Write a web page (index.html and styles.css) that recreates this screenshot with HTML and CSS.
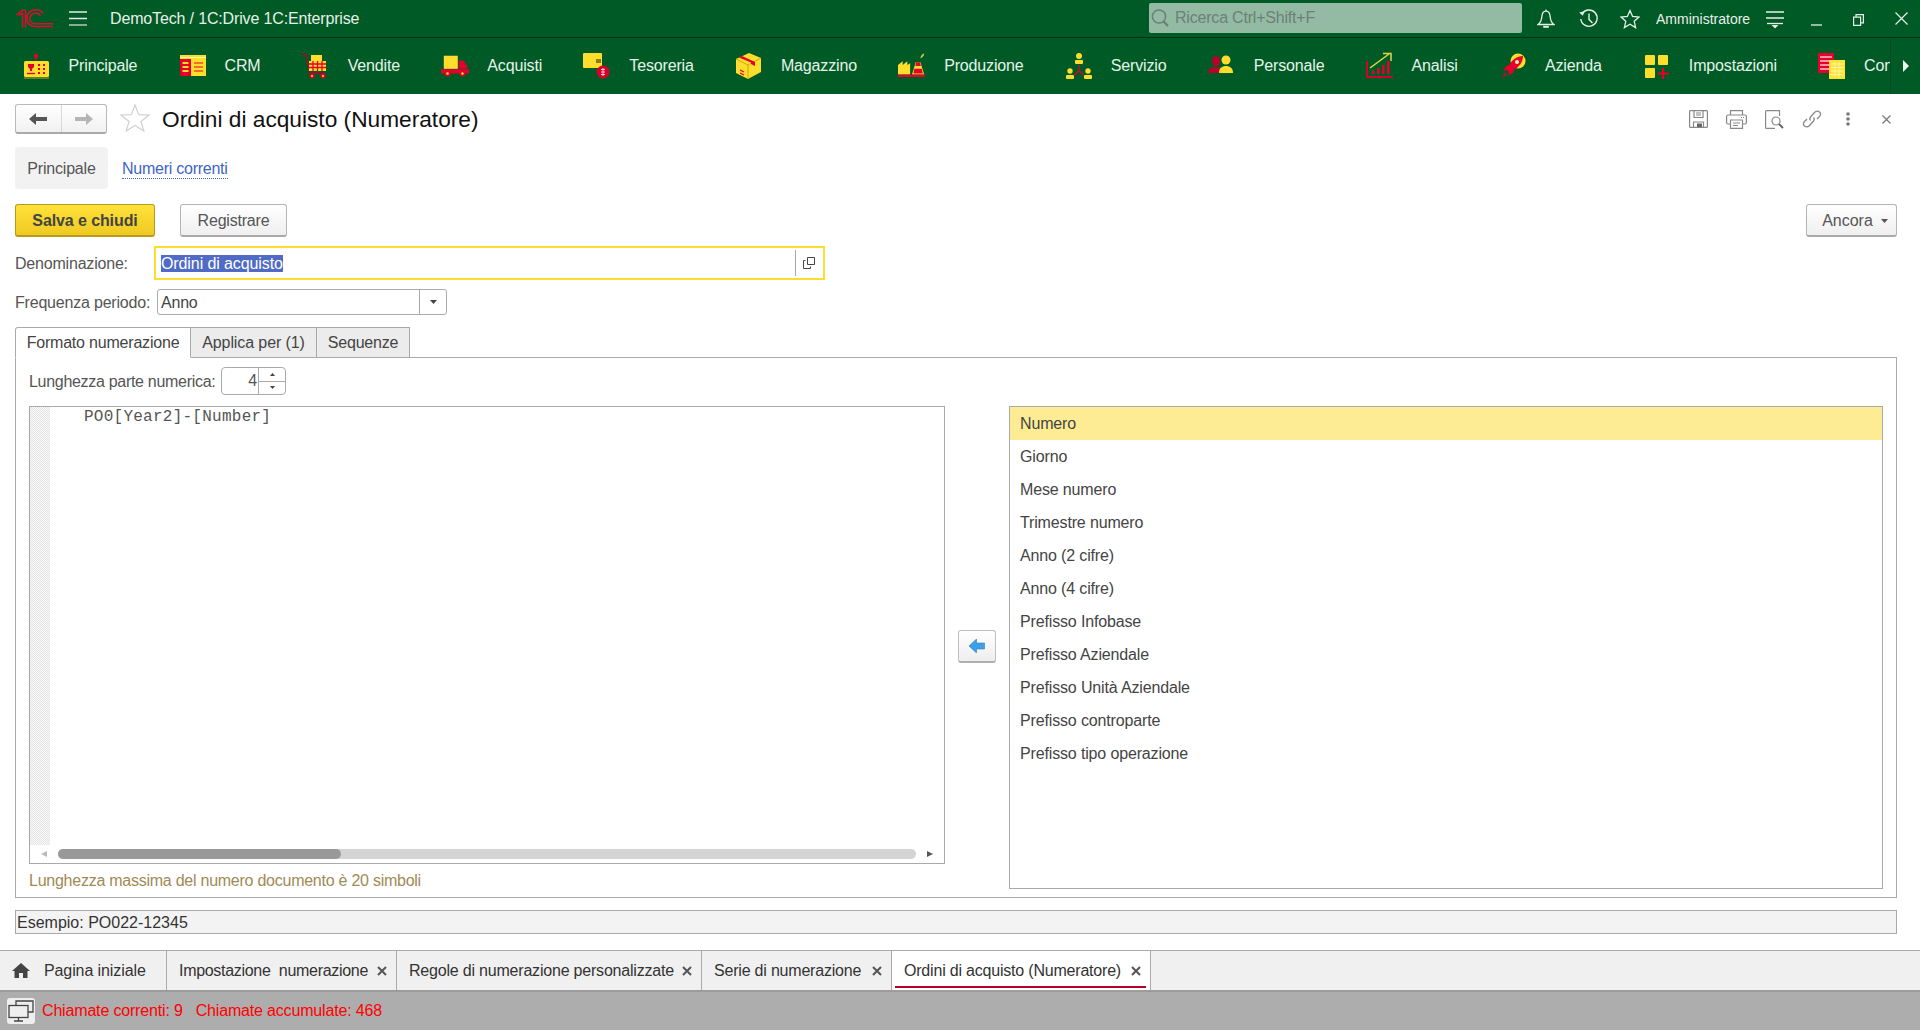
FILE: index.html
```html
<!DOCTYPE html>
<html lang="it">
<head>
<meta charset="utf-8">
<title>Ordini di acquisto (Numeratore)</title>
<link rel="stylesheet" href="styles.css">
</head>
<body>
<header class="topbar">
  <svg class="logo" width="38" height="19" viewBox="0 0 38 19" fill="none" stroke="#d8102d" stroke-width="1.600">
    <path d="M1 6 7.500 1.200H10.500V18.500" stroke-width="1.500"/>
    <path d="M3.500 6.500 7.500 4V18.500" stroke-width="1.500"/>
    <path d="M28 4.500A8.500 8.500 0 0 0 20 .9 8.300 8.300 0 0 0 20 17.500H38"/>
    <path d="M25.500 6.500A5.500 5.500 0 0 0 20 4.200 5.200 5.200 0 0 0 20 14.800H38"/>
  </svg>
  <svg class="burger" width="18" height="15" viewBox="0 0 18 15" stroke="#e4ebe6" stroke-width="1.500"><path d="M0 1h18M0 7.500h18"/><path d="M0 14h18" stroke="#b7c6bc"/></svg>
  <span class="app-title">DemoTech / 1C:Drive 1C:Enterprise</span>
  <div class="search">
    <svg width="18" height="20" viewBox="0 0 18 20" fill="none" stroke="#6b7d74" stroke-width="1.500"><circle cx="8" cy="8.500" r="6.600"/><path d="M12.600 13.500 17 18" stroke-width="2.200"/></svg>
    <span>Ricerca Ctrl+Shift+F</span>
  </div>
  <svg class="bell" width="18" height="20" viewBox="0 0 18 20" fill="none" stroke="#e8efe9" stroke-width="1.300"><path d="M9 2.200C5.800 2.200 5 5 4.800 8 4.600 11 3 14 1 15.500H17C15 14 13.400 11 13.200 8 13 5 12.200 2.200 9 2.200Z"/><path d="M9 .5V2.200"/><path d="M6.200 17.800H11.800" stroke-width="2"/></svg>
  <svg class="hist" width="20" height="20" viewBox="0 0 20 20" fill="none" stroke="#e8efe9" stroke-width="1.400"><path d="M3.200 4.500A8.200 8.200 0 1 1 1.800 10"/><path d="M.6 3.400 3.600 6.200 5.200 2.200" fill="#e8efe9" stroke-width=".8"/><path d="M10 4.500V10.500L13.500 14"/></svg>
  <svg class="fav" width="20" height="20" viewBox="0 0 20 20" fill="none" stroke="#e8efe9" stroke-width="1.300"><path d="M10 1.500 12.600 7.400 19 8 14.200 12.300 15.600 18.600 10 15.300 4.400 18.600 5.800 12.300 1 8 7.400 7.400Z"/></svg>
  <span class="user">Amministratore</span>
  <svg class="filter" width="18" height="18" viewBox="0 0 18 18" stroke="#e8efe9" stroke-width="1.300"><path d="M0 1h18M0 7h18"/><path d="M1 12.500h16" /><path d="M5.500 14h7L9 17.500Z" fill="#e8efe9" stroke="none"/></svg>
  <svg class="win-min" width="11" height="14" viewBox="0 0 11 14" stroke="#e8efe9" stroke-width="1.300"><path d="M0 13h11"/></svg>
  <svg class="win-rest" width="11" height="12" viewBox="0 0 11 12" fill="none" stroke="#e8efe9" stroke-width="1.200"><path d="M.6 3.200H7.600V11.400H.6Z"/><path d="M3 3V.7H10.400V8.800H7.800"/></svg>
  <svg class="win-close" width="13" height="13" viewBox="0 0 13 13" stroke="#e8efe9" stroke-width="1.200"><path d="M.5.5 12.500 12.500M12.500.5.5 12.500"/></svg>
</header>

<nav class="nav">
  <div class="nav-scroll">
    <div class="nav-item">
      <svg width="28" height="26" viewBox="0 0 28 26"><path d="M13 1.500V9" stroke="#e4002b" stroke-width="1.200"/><circle cx="13" cy="3" r="2.200" fill="#e4002b"/><rect x="1" y="8" width="25" height="16" rx="1.500" fill="#ffdd2d"/><path d="M5 11h6v3l-2 2v2h-2v-2l-2-2Z" fill="#e4002b"/><path d="M4 20.500h8" stroke="#e4002b" stroke-width="1.400"/><path d="M15 11h2v2h-2zM20 11h2v2h-2zM15 15h2v2h-2zM20 15h2v2h-2zM15 19h2v2h-2zM20 19h2v2h-2z" fill="#e4002b"/><path d="M1 25h25" stroke="#b9a324" stroke-width="1"/></svg>
      <span>Principale</span>
    </div>
    <div class="nav-item">
      <svg width="28" height="26" viewBox="0 0 28 26"><rect x="1" y="2" width="26" height="21" fill="#ffdd2d"/><path d="M1 4.500h26" stroke="#fff6a8" stroke-width="1"/><rect x="1" y="6" width="11" height="17" fill="#e4002b"/><path d="M3.500 10h6M3.500 14h6M3.500 18h6" stroke="#ffdd2d" stroke-width="1.800"/><path d="M15 10h9M15 14h9M15 18h9" stroke="#e4002b" stroke-width="1"/></svg>
      <span>CRM</span>
    </div>
    <div class="nav-item">
      <svg width="28" height="26" viewBox="1 0 28 26"><path d="M1 1 5 2 9 20H24" fill="none" stroke="#b8002a" stroke-width="1.300"/><rect x="10" y="2" width="11" height="7" fill="#ffdd2d"/><rect x="8" y="8" width="17" height="10" fill="#ffdd2d"/><path d="M8 11h17M8 14.500h17M12 8v10M16.500 8v10M21 8v10" stroke="#e4002b" stroke-width="1.300"/><circle cx="11" cy="23" r="2.500" fill="#e4002b"/><circle cx="22" cy="23" r="2.500" fill="#e4002b"/><circle cx="11" cy="23" r="1" fill="#ffdd2d"/><circle cx="22" cy="23" r="1" fill="#ffdd2d"/></svg>
      <span>Vendite</span>
    </div>
    <div class="nav-item">
      <svg width="30" height="26" viewBox="0 0 30 26"><rect x="3" y="2" width="15" height="14" fill="#ffdd2d"/><path d="M19 7h5l4 6v3H19Z" fill="#e4002b"/><path d="M0 16.500h30V21H0Z" fill="#e4002b"/><circle cx="7" cy="21" r="3.200" fill="#e4002b"/><circle cx="23" cy="21" r="3.200" fill="#e4002b"/><circle cx="7" cy="21" r="1.300" fill="#ffdd2d"/><circle cx="23" cy="21" r="1.300" fill="#ffdd2d"/></svg>
      <span>Acquisti</span>
    </div>
    <div class="nav-item">
      <svg width="28" height="26" viewBox="0 0 28 26"><rect x="0" y="0" width="19" height="15" rx="1" fill="#ffdd2d"/><rect x="13" y="6" width="5" height="4" fill="#8a7a20"/><circle cx="20" cy="19" r="6.500" fill="#d5002b"/><path d="M20 15v8M18 16.500h4M18 19h4M18 21.500h4" stroke="#ffc9c9" stroke-width="1"/></svg>
      <span>Tesoreria</span>
    </div>
    <div class="nav-item">
      <svg width="28" height="26" viewBox="-1 0 28 26"><path d="M13 0 25 5V19L12 26 0 20V6Z" fill="#ffdd2d"/><path d="M0 6 12 12 25 5M12 12V26" fill="none" stroke="#c9a90f" stroke-width="1"/><path d="M6 3 19 9V13L15 11V9.500L3 4.500Z" fill="#e4002b"/><path d="M4 17l4 2M4 20l4 2" stroke="#e4002b" stroke-width="1.200"/></svg>
      <span>Magazzino</span>
    </div>
    <div class="nav-item">
      <svg width="30" height="28" viewBox="0 0 30 28"><path d="M0 21V13L5 9V13L10 9V13L13 11V23H0Z" fill="#ffdd2d"/><path d="M19 10H24L28 23H15Z" fill="#ffdd2d"/><path d="M19.500 10H23.500L24.500 14H18.500Z" fill="#e4002b"/><path d="M17.500 17H25.500L26.500 22H16.500Z" fill="#e4002b"/><path d="M0 24.500H29" stroke="#e4002b" stroke-width="2.600"/><path d="M24 6C24 3 26 1 28 .5 28 3 26 5 24 6Z" fill="#c7c94a"/></svg>
      <span>Produzione</span>
    </div>
    <div class="nav-item">
      <svg width="28" height="28" viewBox="0 0 28 28"><circle cx="14" cy="4" r="3" fill="#ffdd2d"/><rect x="10" y="8" width="8" height="4" rx="1" fill="#ffdd2d"/><circle cx="5" cy="19" r="2.700" fill="#ffdd2d"/><rect x="1" y="23" width="8" height="4" rx="1" fill="#ffdd2d"/><circle cx="23" cy="19" r="2.700" fill="#ffdd2d"/><rect x="19" y="23" width="8" height="4" rx="1" fill="#ffdd2d"/><path d="M14 13V19M14 19 9 23M14 19 19 23" stroke="#e4002b" stroke-width="1.300" fill="none"/></svg>
      <span>Servizio</span>
    </div>
    <div class="nav-item">
      <svg width="28" height="26" viewBox="0 0 28 26"><ellipse cx="8" cy="8" rx="4" ry="5" fill="#b8002a"/><path d="M0 20C0 15 4 14 8 14S14 15 14 20Z" fill="#b8002a"/><circle cx="18" cy="7" r="4.500" fill="#ffdd2d"/><path d="M11 20C11 15 14 13 18 13S25 15 25 20Z" fill="#ffdd2d"/></svg>
      <span>Personale</span>
    </div>
    <div class="nav-item">
      <svg width="28" height="28" viewBox="0 0 28 28"><path d="M1 9V25H27" fill="none" stroke="#d5002b" stroke-width="2"/><path d="M6 22V19h2.500v3zM11 22V16h2.500v6zM16 22V13h2.500v9zM21 22V9h2.500v13z" fill="#e4002b"/><path d="M4 16 23 2" stroke="#e3d84a" stroke-width="1.500"/><path d="M17 1.500H25V9" fill="none" stroke="#e3d84a" stroke-width="1.500"/></svg>
      <span>Analisi</span>
    </div>
    <div class="nav-item">
      <svg width="28" height="28" viewBox="0 0 28 28"><circle cx="19" cy="9" r="7.500" fill="#ffdd2d"/><path d="M24 4C18 4 13 8 10 13L7 14 4 19 8 18 10 21 9 24 14 21 15 18C20 15 24 10 24 4Z" fill="#e4002b"/><circle cx="18" cy="10" r="2" fill="#fff2b0"/><path d="M6 20 2 26 8 23Z" fill="#a8122d"/></svg>
      <span>Azienda</span>
    </div>
    <div class="nav-item">
      <svg width="28" height="26" viewBox="0 0 28 26"><rect x="2" y="2" width="10" height="10" rx="1" fill="#ffdd2d"/><rect x="15" y="2" width="10" height="10" rx="1" fill="#ffdd2d"/><rect x="2" y="15" width="10" height="10" rx="1" fill="#ffdd2d"/><path d="M20 15V26M15 20.500H26" stroke="#e4002b" stroke-width="2.200"/></svg>
      <span>Impostazioni</span>
    </div>
    <div class="nav-item">
      <svg width="28" height="28" viewBox="0 0 28 28"><rect x="0" y="1" width="16" height="20" fill="#e4002b"/><path d="M2 5h12M2 9h10M2 13h10M2 17h10" stroke="#ffc2cc" stroke-width="1.500"/><rect x="11" y="8" width="16" height="19" fill="#ffe23a"/><path d="M13 12h12M13 15.500h12M13 19h12M13 22.500h12M17 10v15M21 10v15" stroke="#fff4a0" stroke-width="1"/></svg>
      <span>Contabilità</span>
    </div>
  </div>
  <div class="nav-more"><svg width="6" height="12" viewBox="0 0 6 12" fill="#f2f5f2"><path d="M0 0 6 6 0 12Z"/></svg></div>
</nav>

<main class="main">
  <div class="head-row">
    <div class="nav-btns">
      <div class="nav-btn"><svg width="18" height="12" viewBox="0 0 18 12" fill="#555"><path d="M0 6 7 0V4H18V8H7V12Z"/></svg></div>
      <div class="nav-btn nav-btn-last"><svg width="18" height="12" viewBox="0 0 18 12" fill="#b5b5b5"><path d="M18 6 11 0V4H0V8H11V12Z"/></svg></div>
    </div>
    <svg class="star" width="30" height="28" viewBox="0 0 30 28" fill="none" stroke="#d0d0d0" stroke-width="1.200"><path d="M15 1 18.700 10.600 29 11 21 17.500 23.800 27 15 21.500 6.200 27 9 17.500 1 11 11.300 10.600Z"/></svg>
    <h1 class="title">Ordini di acquisto (Numeratore)</h1>
    <div class="doc-tools">
      <svg width="19" height="18" viewBox="0 0 19 18" fill="none" stroke="#888" stroke-width="1.200"><path d="M1.500.6H17.500Q18.400.6 18.400 1.500V16.500Q18.400 17.400 17.500 17.400H1.500Q.6 17.400.6 16.500V1.500Q.6.6 1.500.6Z"/><path d="M5 .6V7.500H14V.6M7 3H12M7 5H12"/><path d="M4.500 17.400V12H14.500V17.400"/><rect x="8" y="13.500" width="5" height="3.500" fill="#666" stroke="none"/></svg>
      <svg width="21" height="19" viewBox="0 0 21 19" fill="none" stroke="#888" stroke-width="1.200"><path d="M4.500 5V.6H16.500V5"/><path d="M4.500 14H2Q.6 14 .6 12.500V6.500Q.6 5 2 5H19Q20.400 5 20.400 6.500V12.500Q20.400 14 19 14H16.500"/><path d="M4.500 10H16.500V18.400H4.500ZM7 13H14M7 15.500H12"/><path d="M15 7.500h3" stroke-dasharray="1 1"/></svg>
      <svg width="19" height="19" viewBox="0 0 19 19" fill="none" stroke="#888" stroke-width="1.200"><path d="M10 18.400H1.500Q.6 18.400.6 17.500V1.500Q.6.6 1.500.6H14.500V6"/><circle cx="11" cy="11" r="4"/><path d="M14 14 18 18" stroke="#666" stroke-width="2"/></svg>
      <svg width="20" height="20" viewBox="0 0 20 20" fill="none" stroke="#888" stroke-width="1.300"><path d="M8.500 11.500 Q7 10 8.500 8L12.500 3.500Q15 1 17.500 3T17 8L15 10"/><path d="M11.500 8.500Q13 10 11.500 12L7.500 16.500Q5 19 2.500 17T3 12L5 10"/></svg>
      <svg class="tool-dots" width="4" height="14" viewBox="0 0 4 14" fill="#777"><circle cx="2" cy="2" r="1.800"/><circle cx="2" cy="7" r="1.800"/><circle cx="2" cy="12" r="1.800"/></svg>
      <svg class="tool-x" width="9" height="9" viewBox="0 0 9 9" stroke="#777" stroke-width="1.200"><path d="M.5.5 8.500 8.500M8.500.5.5 8.500"/></svg>
    </div>
  </div>

  <div class="section-tabs">
    <div class="section-tab">Principale</div>
    <a class="section-link">Numeri correnti</a>
  </div>

  <div class="commands">
    <div class="btn btn-primary">Salva e chiudi</div>
    <div class="btn btn-save">Registrare</div>
    <div class="btn btn-more">Ancora <svg width="7" height="4" viewBox="0 0 7 4" fill="#555"><path d="M0 0H7L3.500 4Z"/></svg></div>
  </div>

  <div class="field-row field-row-name">
    <label class="field-label">Denominazione:</label>
    <div class="input-focus">
      <span class="input-text"><span class="selected">Ordini di acquisto</span></span>
      <span class="input-action"><svg width="12" height="12" viewBox="0 0 12 12" fill="none" stroke="#444" stroke-width="1"><path d="M4.500.5H11.500V7.500H4.500Z"/><path d="M2.500 3.500H.5V11.500H7.500V9.500"/></svg></span>
    </div>
  </div>

  <div class="field-row field-row-freq">
    <label class="field-label">Frequenza periodo:</label>
    <div class="select">
      <span class="select-text">Anno</span>
      <span class="select-btn"><svg width="7" height="4" viewBox="0 0 7 4" fill="#444"><path d="M0 0H7L3.500 4Z"/></svg></span>
    </div>
  </div>

  <div class="tabs">
    <div class="tab tab-active">Formato numerazione</div>
    <div class="tab tab-apply">Applica per (1)</div>
    <div class="tab tab-seq">Sequenze</div>
  </div>

  <section class="panel">
    <div class="panel-left">
      <div class="length-row">
        <label class="length-label">Lunghezza parte numerica:</label>
        <div class="spin">
          <span class="spin-value">4</span>
          <span class="spin-btns">
            <span class="spin-up"><svg width="5" height="3" viewBox="0 0 5 3" fill="#444"><path d="M0 3H5L2.500 0Z"/></svg></span>
            <span class="spin-down"><svg width="5" height="3" viewBox="0 0 5 3" fill="#444"><path d="M0 0H5L2.500 3Z"/></svg></span>
          </span>
        </div>
      </div>
      <div class="editor">
        <div class="editor-body">
          <div class="gutter"></div>
          <pre class="code">PO0[Year2]-[Number]</pre>
        </div>
        <div class="hscroll">
          <svg width="6" height="6" viewBox="0 0 6 6" fill="#bbb"><path d="M6 0V6L0 3Z"/></svg>
          <div class="hscroll-track"><div class="hscroll-thumb"></div></div>
          <svg width="6" height="6" viewBox="0 0 6 6" fill="#555"><path d="M0 0V6L6 3Z"/></svg>
        </div>
      </div>
      <p class="hint">Lunghezza massima del numero documento è 20 simboli</p>
    </div>
    <div class="panel-mid">
      <div class="arrow-btn"><svg width="16" height="14" viewBox="0 0 16 14"><path d="M0 7 7.500 0V4H15.500V10H7.500V14Z" fill="#3d9fe6" stroke="#2f7fbd" stroke-width=".6"/></svg></div>
    </div>
    <ul class="list">
      <li class="list-item list-item-active">Numero</li>
      <li class="list-item">Giorno</li>
      <li class="list-item">Mese numero</li>
      <li class="list-item">Trimestre numero</li>
      <li class="list-item">Anno (2 cifre)</li>
      <li class="list-item">Anno (4 cifre)</li>
      <li class="list-item">Prefisso Infobase</li>
      <li class="list-item">Prefisso Aziendale</li>
      <li class="list-item">Prefisso Unità Aziendale</li>
      <li class="list-item">Prefisso controparte</li>
      <li class="list-item">Prefisso tipo operazione</li>
    </ul>
  </section>

  <div class="example">Esempio: PO022-12345</div>
</main>

<div class="doc-tabs">
  <div class="doc-tab doc-tab-home"><svg width="18" height="15" viewBox="0 0 18 15" fill="#444"><path d="M9 0 18 8H15.500V15H11V10H7V15H2.500V8H0Z"/></svg><span>Pagina iniziale</span></div>
  <div class="doc-tab doc-tab-2"><span class="doc-tab-text">Impostazione  numerazione</span><svg width="10" height="10" viewBox="0 0 10 10" stroke="#555" stroke-width="2"><path d="M1 1 9 9M9 1 1 9"/></svg></div>
  <div class="doc-tab doc-tab-3"><span class="doc-tab-text">Regole di numerazione personalizzate</span><svg width="10" height="10" viewBox="0 0 10 10" stroke="#555" stroke-width="2"><path d="M1 1 9 9M9 1 1 9"/></svg></div>
  <div class="doc-tab doc-tab-4"><span class="doc-tab-text">Serie di numerazione</span><svg width="10" height="10" viewBox="0 0 10 10" stroke="#555" stroke-width="2"><path d="M1 1 9 9M9 1 1 9"/></svg></div>
  <div class="doc-tab doc-tab-5 doc-tab-active"><span class="doc-tab-text">Ordini di acquisto (Numeratore)</span><svg width="10" height="10" viewBox="0 0 10 10" stroke="#555" stroke-width="2"><path d="M1 1 9 9M9 1 1 9"/></svg></div>
</div>

<footer class="status">
  <div class="status-btn"><svg width="26" height="22" viewBox="0 0 26 22" fill="none" stroke="#444" stroke-width="1.300"><path d="M8 5V1H25V12H20"/><rect x="1" y="5.500" width="19" height="12" fill="#eee"/><path d="M10.500 17.500V21M6 21H15"/></svg></div>
  <span class="status-text">Chiamate correnti: 9</span>
  <span class="status-text">Chiamate accumulate: 468</span>
</footer>
</body>
</html>
```
FILE: styles.css
```css
* { box-sizing: border-box; }
html, body { margin: 0; padding: 0; }
body {
  width: 1920px;
  height: 1030px;
  overflow: hidden;
  display: flex;
  flex-direction: column;
  background: #fff;
  color: #444;
  font-family: "Liberation Sans", Arial, sans-serif;
  font-size: 16px;
  line-height: 18px;
  letter-spacing: -.2px;
}

/* Top bar */
.topbar {
  height: 38px;
  flex: none;
  display: flex;
  align-items: center;
  padding-left: 15px;
  background: #005a26;
  border-bottom: 1px solid #01301a;
  color: #e8efe9;
}
.logo { flex: none; margin-right: 16px; }
.burger { flex: none; margin-right: 23px; }
.app-title { width: 1039px; flex: none; white-space: nowrap; letter-spacing: -.15px; }
.search {
  width: 373px;
  height: 30px;
  flex: none;
  margin-top: -1px;
  display: flex;
  align-items: center;
  gap: 6px;
  padding-left: 2px;
  background: #93bba4;
  border-radius: 2px;
  color: #6d7f76;
}
.bell { flex: none; margin-left: 15px; }
.hist { flex: none; margin-left: 24px; }
.fav { flex: none; margin-left: 21px; }
.user { flex: none; margin-left: 16px; width: 94px; font-size: 14px; white-space: nowrap; letter-spacing: 0; }
.filter { flex: none; margin-left: 16px; margin-top: 2px; }
.win-min { flex: none; margin-left: 27px; }
.win-rest { flex: none; margin-left: 31px; margin-top: 2px; }
.win-close { flex: none; margin-left: 31px; }

/* Sections nav */
.nav {
  height: 56px;
  flex: none;
  display: flex;
  background: #005a26;
  color: #e6f3ea;
  letter-spacing: -.15px;
}
.nav-scroll {
  width: 1890px;
  display: flex;
  overflow: hidden;
  padding-left: 2px;
}
.nav-item {
  flex: none;
  display: flex;
  align-items: center;
  gap: 18px;
  padding: 0 20.6px;
  white-space: nowrap;
}
.nav-item svg { flex: none; width: 28px; }
.nav-more {
  flex: 1;
  display: flex;
  align-items: center;
  justify-content: center;
  border-left: 1px solid #044a22;
}

/* Main form */
.main {
  flex: 1;
  min-height: 0;
  padding: 10px 23px 0 15px;
}
.head-row {
  height: 30px;
  display: flex;
  align-items: center;
}
.nav-btns {
  width: 92px;
  height: 30px;
  flex: none;
  display: flex;
  border: 1px solid #b9b9b9;
  border-bottom: 2px solid #aaa;
  border-radius: 3px;
  background: linear-gradient(#fff, #f1f1f1);
}
.nav-btn {
  flex: 1;
  display: flex;
  align-items: center;
  justify-content: center;
}
.nav-btn-last { border-left: 1px solid #d8d8d8; }
.star { flex: none; margin-left: 13px; margin-top: -2px; }
.title {
  margin: 0 0 0 12px;
  font-size: 22.7px;
  font-weight: 400;
  line-height: 28px;
  letter-spacing: 0;
  color: #111;
  white-space: nowrap;
}
.doc-tools {
  margin-left: auto;
  width: 215px;
  flex: none;
  display: flex;
  align-items: center;
  gap: 18px;
  padding-left: 7px;
}
.doc-tools svg { flex: none; }
.tool-dots { margin-left: 6px; }
.tool-x { margin-left: 14px; }

.section-tabs {
  height: 42px;
  margin-top: 13px;
  display: flex;
  align-items: center;
}
.section-tab {
  width: 93px;
  height: 42px;
  padding-top: 1px;
  display: flex;
  align-items: center;
  justify-content: center;
  background: #f2f2f2;
  border-radius: 4px;
  color: #555;
}
.section-link {
  margin: 2px 0 0 14px;
  color: #3d64c8;
  border-bottom: 1px dotted #3d64c8;
  letter-spacing: -.25px;
}

.commands {
  height: 33px;
  margin-top: 15px;
  display: flex;
}
.btn {
  height: 33px;
  padding-top: 1px;
  display: flex;
  align-items: center;
  justify-content: center;
  border: 1px solid #b5b5b5;
  border-bottom: 2px solid #a9a9a9;
  border-radius: 3px;
  background: linear-gradient(#fff, #efefef);
  color: #555;
  white-space: nowrap;
}
.btn-primary {
  width: 140px;
  border-color: #b79b1c;
  background: linear-gradient(#ffe23a, #efc921);
  color: #444;
  font-weight: 700;
  letter-spacing: -.1px;
}
.btn-save { width: 107px; margin-left: 25px; }
.btn-more { width: 91px; margin-left: auto; gap: 8px; padding-left: 7px; letter-spacing: 0; }

.field-row { display: flex; align-items: center; }
.field-row-name { height: 34px; margin-top: 9px; }
.field-row-freq { height: 26px; margin-top: 9px; }
.field-label { width: 142px; flex: none; padding-top: 2px; color: #555; white-space: nowrap; }
.input-focus {
  width: 671px;
  height: 34px;
  margin-left: -3px;
  display: flex;
  align-items: center;
  justify-content: space-between;
  border: 2px solid #ffdd2d;
  padding-left: 5px;
}
.input-text { padding-top: 2px; color: #444; letter-spacing: -.1px; }
.selected { background: #4f6bc5; color: #fff; }
.input-action {
  width: 27px;
  height: 26px;
  display: flex;
  align-items: center;
  justify-content: center;
  border-left: 1px solid #aaa;
  margin-right: 1px;
}
.select {
  width: 290px;
  height: 26px;
  display: flex;
  align-items: center;
  justify-content: space-between;
  border: 1px solid #aaa;
  border-radius: 3px;
  padding-left: 3px;
}
.select-text { padding-top: 2px; }
.select-btn {
  width: 27px;
  height: 24px;
  display: flex;
  align-items: center;
  justify-content: center;
  border-left: 1px solid #aaa;
}

.tabs {
  height: 31px;
  margin-top: 12px;
  display: flex;
  position: relative;
  z-index: 1;
}
.tab {
  height: 31px;
  display: flex;
  align-items: center;
  justify-content: center;
  border: 1px solid #aaa;
  border-left: 0;
  background: #ececec;
  color: #444;
  white-space: nowrap;
}
.tab-active {
  width: 176px;
  border-left: 1px solid #aaa;
  border-bottom-color: #fff;
  border-radius: 3px 0 0 0;
  background: #fff;
}
.tab-apply { width: 126px; letter-spacing: -.1px; }
.tab-seq { width: 93px; }

.panel {
  height: 541px;
  margin-top: -1px;
  display: flex;
  padding: 9px 13px 0;
  border: 1px solid #aaa;
}
.panel-left { width: 916px; flex: none; }
.length-row {
  height: 28px;
  display: flex;
  align-items: center;
  color: #555;
}
.length-label { width: 192px; flex: none; padding-top: 1px; white-space: nowrap; letter-spacing: -.3px; }
.spin {
  width: 65px;
  height: 28px;
  display: flex;
  border: 1px solid #aaa;
  border-radius: 4px;
}
.spin-value { flex: 1; text-align: right; line-height: 26px; padding-right: 1px; }
.spin-btns {
  width: 27px;
  display: flex;
  flex-direction: column;
  border-left: 1px solid #aaa;
}
.spin-up, .spin-down {
  flex: 1;
  display: flex;
  align-items: center;
  justify-content: center;
}
.spin-up { border-bottom: 1px solid #aaa; }
.editor {
  height: 458px;
  margin-top: 11px;
  display: flex;
  flex-direction: column;
  border: 1px solid #aaa;
}
.editor-body { flex: 1; min-height: 0; display: flex; }
.gutter {
  width: 20px;
  margin-bottom: 2px;
  background: repeating-conic-gradient(#e3e3e3 0 25%, #fafafa 0 50%) 0 0 / 2px 2px;
}
.code {
  margin: 0;
  padding: 1px 0 0 34px;
  font-family: "Liberation Mono", "Courier New", monospace;
  font-size: 16px;
  line-height: 18px;
  letter-spacing: .25px;
  color: #555;
}
.hscroll {
  height: 16px;
  flex: none;
  display: flex;
  align-items: center;
  padding: 0 11px 3px 11px;
  gap: 11px;
}
.hscroll svg { flex: none; }
.hscroll-track {
  flex: 1;
  height: 10px;
  border-radius: 5px;
  background: #d4d4d4;
}
.hscroll-thumb {
  width: 283px;
  height: 10px;
  border-radius: 5px;
  background: #999;
}
.hint { margin: 8px 0 0; color: #a08a55; white-space: nowrap; letter-spacing: -.25px; }
.panel-mid {
  width: 64px;
  flex: none;
  padding: 263px 0 0 13px;
}
.arrow-btn {
  width: 38px;
  height: 33px;
  display: flex;
  align-items: center;
  justify-content: center;
  border: 1px solid #c0c0c0;
  border-bottom: 2px solid #b0b0b0;
  border-radius: 3px;
  background: linear-gradient(#fff, #eee);
}
.list {
  width: 874px;
  height: 483px;
  flex: none;
  margin: 39px 0 0;
  padding: 0;
  list-style: none;
  border: 1px solid #aaa;
  letter-spacing: -.15px;
}
.list-item {
  height: 33px;
  padding-left: 10px;
  line-height: 33px;
  color: #444;
}
.list-item-active { background: #feec95; }

.example {
  height: 24px;
  margin-top: 12px;
  padding-left: 1px;
  border: 1px solid #aaa;
  background: #f3f3f3;
  line-height: 24px;
  letter-spacing: 0;
  color: #333;
}

/* Open documents */
.doc-tabs {
  height: 40px;
  flex: none;
  display: flex;
  border-top: 1px solid #aaa;
  background: #f0f0f0;
}
.doc-tab {
  flex: none;
  display: flex;
  align-items: center;
  justify-content: space-between;
  padding: 0 9px 0 12px;
  border-right: 1px solid #aaa;
  white-space: nowrap;
  color: #333;
}
.doc-tab svg { flex: none; }
.doc-tab-text { white-space: pre; }
.doc-tab-home { width: 167px; justify-content: flex-start; gap: 14px; letter-spacing: -.1px; }
.doc-tab-2 { width: 230px; letter-spacing: -.3px; }
.doc-tab-3 { width: 305px; }
.doc-tab-4 { width: 190px; }
.doc-tab-5 { width: 259px; }
.doc-tab-active {
  background: #fff linear-gradient(#b5002b, #b5002b) no-repeat 3px calc(100% - 2px) / calc(100% - 7px) 2px;
}

/* Status bar */
.status {
  height: 40px;
  flex: none;
  display: flex;
  align-items: center;
  gap: 13px;
  padding-left: 7px;
  background: #adadad;
  border-top: 2px solid #9c9c9c;
  color: #f00;
  letter-spacing: -.17px;
}
.status-btn {
  width: 28px;
  height: 26px;
  margin-right: -6px;
  display: flex;
  align-items: center;
  justify-content: center;
  background: #eee;
  border-radius: 3px;
}
```
